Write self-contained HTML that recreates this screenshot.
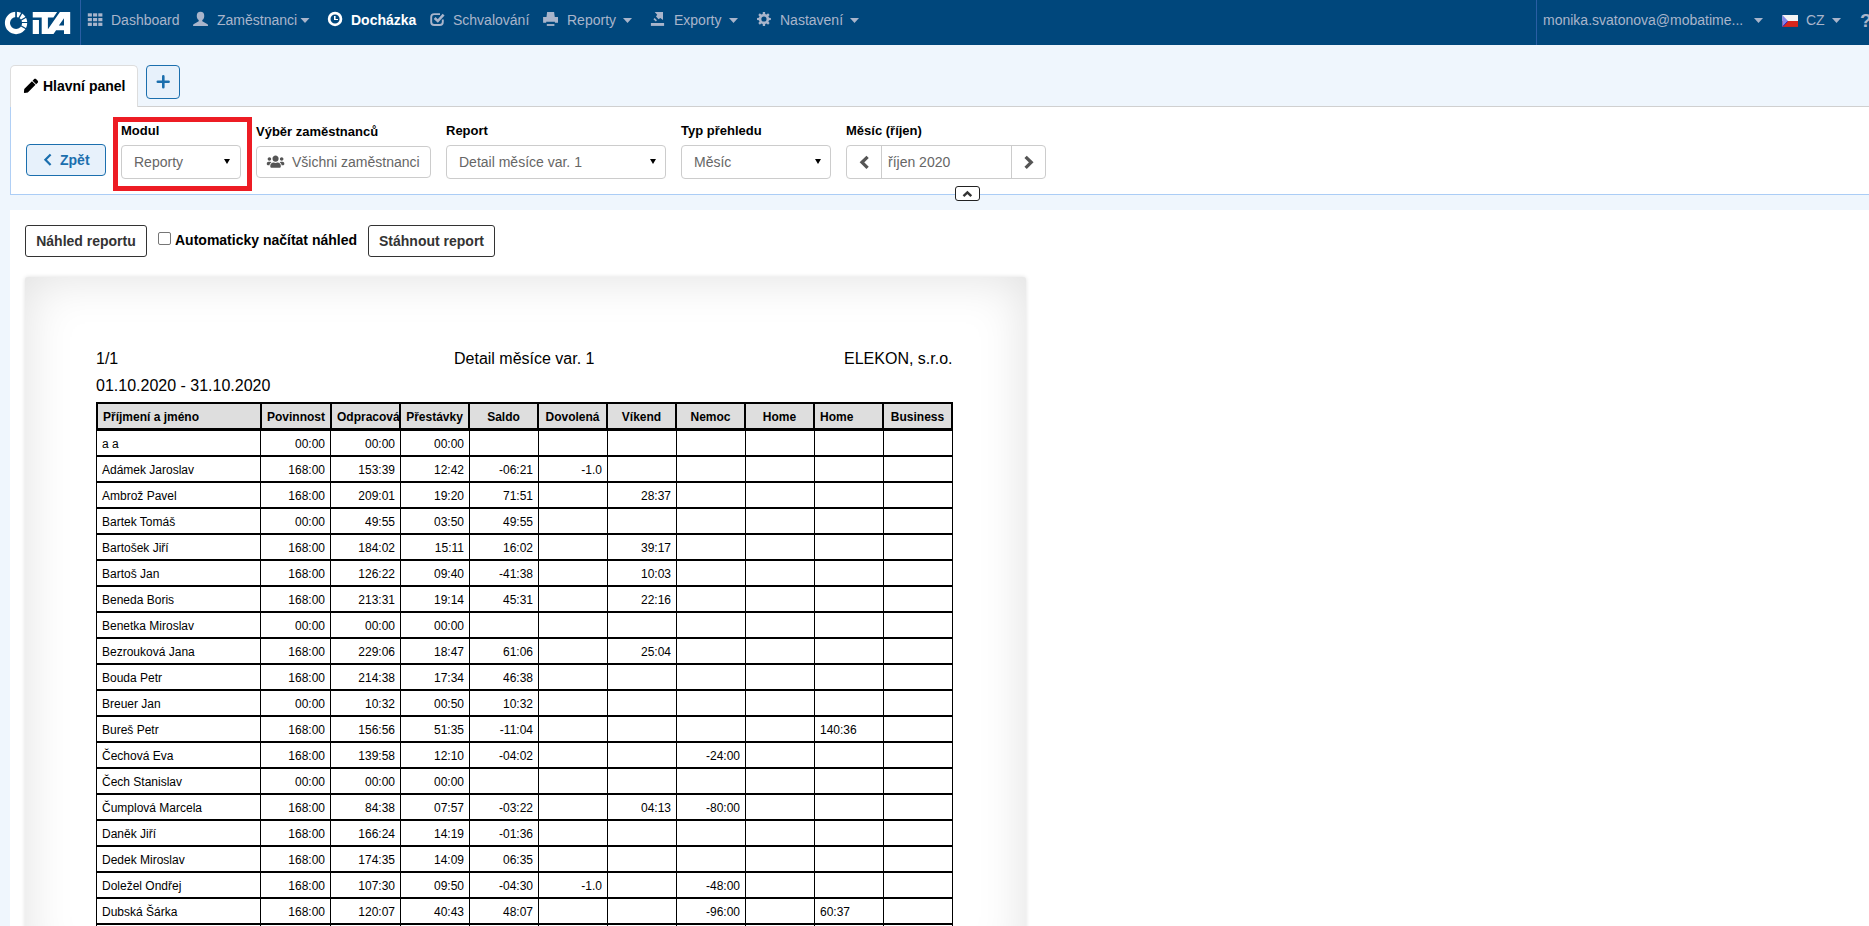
<!DOCTYPE html>
<html lang="cs">
<head>
<meta charset="utf-8">
<title>ITA - Docházka</title>
<style>
*{box-sizing:border-box}
html,body{margin:0;padding:0}
body{width:1869px;height:926px;overflow:hidden;background:#eff6fd;font-family:"Liberation Sans",Arial,sans-serif;font-size:14px;color:#000;position:relative}
.abs{position:absolute}
#nav{left:0;top:0;width:1869px;height:45px;background:#00477c}
#nav .it{position:absolute;top:0;height:40px;line-height:40px;font-size:14px;color:#a9b5cb;white-space:nowrap}
#nav .it.act{color:#fff;font-weight:bold}
#nav .sep{position:absolute;top:0;width:1px;height:45px;background:#2a5ea4}
.caret{position:absolute;width:0;height:0;border-left:4.5px solid transparent;border-right:4.5px solid transparent;border-top:5px solid #a9b5cb}
svg{position:absolute;overflow:visible}
#tab{left:10px;top:65px;width:128px;height:42px;background:#fff;border:1px solid #ddd;border-bottom:none;border-radius:5px 5px 0 0}
#tabline{left:138px;top:106px;width:1731px;height:1px;background:#d0d0d0}
#plus{left:146px;top:65px;width:34px;height:34px;border:1px solid #1b6fae;border-radius:4px;background:#e7f1fb}
#filter{left:10px;top:107px;width:1860px;height:88px;background:#fff;border-left:1px solid #b0cff5;border-bottom:1px solid #abcdf6}
.lbl{position:absolute;font-weight:bold;font-size:13px;line-height:16px;white-space:nowrap;color:#000}
.ctl{position:absolute;background:#fff;border:1px solid #ccc;border-radius:4px;color:#666;font-size:14px;white-space:nowrap}
.ctl span{position:absolute;top:0}
.arrow{position:absolute;width:0;height:0;border-left:3.3px solid transparent;border-right:3.3px solid transparent;border-top:5px solid #000}
#zpet{left:26px;top:144px;width:80px;height:32px;border:1px solid #1b6fae;border-radius:4px;background:#e7f1fb;color:#1b6fae;font-weight:bold;font-size:14px}
#red{left:113px;top:117px;width:139px;height:74px;border:5px solid #ed1c24}
#content{left:10px;top:210px;width:1859px;height:716px;background:#fff}
.btn2{position:absolute;height:32px;border:1px solid #333;border-radius:3px;background:#fff;font-weight:bold;font-size:14px;line-height:30px;text-align:center;color:#333;white-space:nowrap}
#page{left:24.5px;top:276.5px;width:1001px;height:700px;background:#fff;border-radius:3px;box-shadow:0 0 4px rgba(0,0,0,.13), inset 0 0 50px rgba(0,0,0,.125)}
.pt{position:absolute;font-size:16px;line-height:18px;white-space:nowrap;color:#000}
#thd{position:absolute;left:96px;top:402px;width:857px;height:29px;background:#dedede;border-top:2px solid #000;border-bottom:3px solid #000;font-size:12px}
#thd i{position:absolute;top:0;height:24px;background:#000}
#thd b{position:absolute;top:0;height:24px;line-height:26px;text-align:center;white-space:nowrap;overflow:hidden;font-weight:bold}
table{position:absolute;left:96px;top:431px;border-collapse:separate;border-spacing:0;table-layout:fixed;width:857px;font-size:12px}
td{height:26px;border-left:1px solid #000;border-bottom:2px solid #000;padding:0 5px 0 5px;white-space:nowrap;overflow:hidden;line-height:22px;padding-top:2px}
td:last-child{border-right:1px solid #000}
td.r{text-align:right}
td.l{text-align:left}
</style>
</head>
<body>
<div id="nav" class="abs">
  <div class="sep" style="left:80px"></div>
  <div class="sep" style="left:1536px"></div>
  <div class="it" style="left:111px">Dashboard</div>
  <div class="it" style="left:217px">Zaměstnanci</div>
  <div class="it act" style="left:351px">Docházka</div>
  <div class="it" style="left:453px">Schvalování</div>
  <div class="it" style="left:567px">Reporty</div>
  <div class="it" style="left:674px">Exporty</div>
  <div class="it" style="left:780px">Nastavení</div>
  <div class="it" style="left:1543px">monika.svatonova@mobatime...</div>
  <div class="it" style="left:1806px">CZ</div>
  <div class="it" style="left:1860px;top:1px;font-weight:bold;font-size:19px">?</div>
</div>

<div id="tabline" class="abs"></div>
<div id="filter" class="abs"></div>
<div id="tab" class="abs"><span class="abs" style="left:32px;top:11px;font-weight:bold;font-size:14px;line-height:18px;white-space:nowrap">Hlavní panel</span></div>
<div id="plus" class="abs"></div>

<div id="zpet" class="abs"><span class="abs" style="left:33px;top:7px;line-height:16px">Zpět</span></div>
<div id="red" class="abs"></div>
<div class="lbl" style="left:121px;top:123px">Modul</div>
<div class="ctl" style="left:121px;top:145px;width:120px;height:34px"><span style="left:12px;line-height:32px">Reporty</span><div class="arrow" style="left:102.3px;top:13px"></div></div>
<div class="lbl" style="left:256px;top:124px">Výběr zaměstnanců</div>
<div class="ctl" style="left:256px;top:146px;width:175px;height:32px"><span style="left:35px;line-height:31px">Všichni zaměstnanci</span></div>
<div class="lbl" style="left:446px;top:123px">Report</div>
<div class="ctl" style="left:446px;top:145px;width:220px;height:34px"><span style="left:12px;line-height:32px">Detail měsíce var. 1</span><div class="arrow" style="left:203px;top:13px"></div></div>
<div class="lbl" style="left:681px;top:123px">Typ přehledu</div>
<div class="ctl" style="left:681px;top:145px;width:150px;height:34px"><span style="left:12px;line-height:32px">Měsíc</span><div class="arrow" style="left:132.5px;top:13px"></div></div>
<div class="lbl" style="left:846px;top:123px">Měsíc (říjen)</div>
<div class="ctl" style="left:846px;top:145px;width:200px;height:34px"><span style="left:41px;line-height:32px">říjen 2020</span><div class="abs" style="left:34px;top:0;width:1px;height:32px;background:#ccc"></div><div class="abs" style="left:164px;top:0;width:1px;height:32px;background:#ccc"></div></div>
<div class="abs" style="left:955px;top:186px;width:25px;height:15px;border:1px solid #222;border-radius:3px;background:#fff"></div>

<div id="content" class="abs"></div>
<div class="btn2" style="left:25px;top:225px;width:122px">Náhled reportu</div>
<div class="abs" style="left:158px;top:232px;width:13px;height:13px;border:1px solid #767676;border-radius:2px;background:#fff"></div>
<div class="abs" style="left:175px;top:231px;font-weight:bold;font-size:14px;line-height:18px;white-space:nowrap">Automaticky načítat náhled</div>
<div class="btn2" style="left:368px;top:225px;width:127px">Stáhnout report</div>

<div id="page" class="abs"></div>
<div class="pt" style="left:96px;top:350px">1/1</div>
<div class="pt" style="left:454px;top:350px">Detail měsíce var. 1</div>
<div class="pt" style="left:752px;width:200.5px;text-align:right;top:350px">ELEKON, s.r.o.</div>
<div class="pt" style="left:96px;top:377px">01.10.2020 - 31.10.2020</div>
<div id="thd"><i style="left:0px;width:2px"></i><i style="left:164px;width:2px"></i><i style="left:234px;width:2px"></i><i style="left:303px;width:2px"></i><i style="left:372px;width:2px"></i><i style="left:441px;width:2px"></i><i style="left:510px;width:2px"></i><i style="left:579px;width:2px"></i><i style="left:648px;width:2px"></i><i style="left:717px;width:2px"></i><i style="left:786px;width:2px"></i><i style="left:855px;width:2px"></i><b style="left:7px;width:157px;text-align:left">Příjmení a jméno</b><b style="left:166px;width:68px">Povinnost</b><b style="left:241px;width:62px;text-align:left">Odpracová</b><b style="left:305px;width:67px">Přestávky</b><b style="left:374px;width:67px">Saldo</b><b style="left:443px;width:67px">Dovolená</b><b style="left:512px;width:67px">Víkend</b><b style="left:581px;width:67px">Nemoc</b><b style="left:650px;width:67px">Home</b><b style="left:724px;width:62px;text-align:left">Home</b><b style="left:788px;width:67px">Business</b></div>
<table>
<colgroup><col style="width:164px"><col style="width:70px"><col style="width:70px"><col style="width:69px"><col style="width:69px"><col style="width:69px"><col style="width:69px"><col style="width:69px"><col style="width:69px"><col style="width:69px"><col style="width:70px"></colgroup>

<tbody>
<tr><td class="l">a a</td><td class="r">00:00</td><td class="r">00:00</td><td class="r">00:00</td><td class="r"></td><td class="r"></td><td class="r"></td><td class="r"></td><td class="r"></td><td class="l"></td><td class="r"></td></tr>
<tr><td class="l">Adámek Jaroslav</td><td class="r">168:00</td><td class="r">153:39</td><td class="r">12:42</td><td class="r">-06:21</td><td class="r">-1.0</td><td class="r"></td><td class="r"></td><td class="r"></td><td class="l"></td><td class="r"></td></tr>
<tr><td class="l">Ambrož Pavel</td><td class="r">168:00</td><td class="r">209:01</td><td class="r">19:20</td><td class="r">71:51</td><td class="r"></td><td class="r">28:37</td><td class="r"></td><td class="r"></td><td class="l"></td><td class="r"></td></tr>
<tr><td class="l">Bartek Tomáš</td><td class="r">00:00</td><td class="r">49:55</td><td class="r">03:50</td><td class="r">49:55</td><td class="r"></td><td class="r"></td><td class="r"></td><td class="r"></td><td class="l"></td><td class="r"></td></tr>
<tr><td class="l">Bartošek Jiří</td><td class="r">168:00</td><td class="r">184:02</td><td class="r">15:11</td><td class="r">16:02</td><td class="r"></td><td class="r">39:17</td><td class="r"></td><td class="r"></td><td class="l"></td><td class="r"></td></tr>
<tr><td class="l">Bartoš Jan</td><td class="r">168:00</td><td class="r">126:22</td><td class="r">09:40</td><td class="r">-41:38</td><td class="r"></td><td class="r">10:03</td><td class="r"></td><td class="r"></td><td class="l"></td><td class="r"></td></tr>
<tr><td class="l">Beneda Boris</td><td class="r">168:00</td><td class="r">213:31</td><td class="r">19:14</td><td class="r">45:31</td><td class="r"></td><td class="r">22:16</td><td class="r"></td><td class="r"></td><td class="l"></td><td class="r"></td></tr>
<tr><td class="l">Benetka Miroslav</td><td class="r">00:00</td><td class="r">00:00</td><td class="r">00:00</td><td class="r"></td><td class="r"></td><td class="r"></td><td class="r"></td><td class="r"></td><td class="l"></td><td class="r"></td></tr>
<tr><td class="l">Bezrouková Jana</td><td class="r">168:00</td><td class="r">229:06</td><td class="r">18:47</td><td class="r">61:06</td><td class="r"></td><td class="r">25:04</td><td class="r"></td><td class="r"></td><td class="l"></td><td class="r"></td></tr>
<tr><td class="l">Bouda Petr</td><td class="r">168:00</td><td class="r">214:38</td><td class="r">17:34</td><td class="r">46:38</td><td class="r"></td><td class="r"></td><td class="r"></td><td class="r"></td><td class="l"></td><td class="r"></td></tr>
<tr><td class="l">Breuer Jan</td><td class="r">00:00</td><td class="r">10:32</td><td class="r">00:50</td><td class="r">10:32</td><td class="r"></td><td class="r"></td><td class="r"></td><td class="r"></td><td class="l"></td><td class="r"></td></tr>
<tr><td class="l">Bureš Petr</td><td class="r">168:00</td><td class="r">156:56</td><td class="r">51:35</td><td class="r">-11:04</td><td class="r"></td><td class="r"></td><td class="r"></td><td class="r"></td><td class="l">140:36</td><td class="r"></td></tr>
<tr><td class="l">Čechová Eva</td><td class="r">168:00</td><td class="r">139:58</td><td class="r">12:10</td><td class="r">-04:02</td><td class="r"></td><td class="r"></td><td class="r">-24:00</td><td class="r"></td><td class="l"></td><td class="r"></td></tr>
<tr><td class="l">Čech Stanislav</td><td class="r">00:00</td><td class="r">00:00</td><td class="r">00:00</td><td class="r"></td><td class="r"></td><td class="r"></td><td class="r"></td><td class="r"></td><td class="l"></td><td class="r"></td></tr>
<tr><td class="l">Čumplová Marcela</td><td class="r">168:00</td><td class="r">84:38</td><td class="r">07:57</td><td class="r">-03:22</td><td class="r"></td><td class="r">04:13</td><td class="r">-80:00</td><td class="r"></td><td class="l"></td><td class="r"></td></tr>
<tr><td class="l">Daněk Jiří</td><td class="r">168:00</td><td class="r">166:24</td><td class="r">14:19</td><td class="r">-01:36</td><td class="r"></td><td class="r"></td><td class="r"></td><td class="r"></td><td class="l"></td><td class="r"></td></tr>
<tr><td class="l">Dedek Miroslav</td><td class="r">168:00</td><td class="r">174:35</td><td class="r">14:09</td><td class="r">06:35</td><td class="r"></td><td class="r"></td><td class="r"></td><td class="r"></td><td class="l"></td><td class="r"></td></tr>
<tr><td class="l">Doležel Ondřej</td><td class="r">168:00</td><td class="r">107:30</td><td class="r">09:50</td><td class="r">-04:30</td><td class="r">-1.0</td><td class="r"></td><td class="r">-48:00</td><td class="r"></td><td class="l"></td><td class="r"></td></tr>
<tr><td class="l">Dubská Šárka</td><td class="r">168:00</td><td class="r">120:07</td><td class="r">40:43</td><td class="r">48:07</td><td class="r"></td><td class="r"></td><td class="r">-96:00</td><td class="r"></td><td class="l">60:37</td><td class="r"></td></tr>
<tr><td class="l">Dvořák Jan</td><td class="r">168:00</td><td class="r">150:00</td><td class="r">10:00</td><td class="r">02:00</td><td class="r"></td><td class="r"></td><td class="r"></td><td class="r"></td><td class="l"></td><td class="r"></td></tr>
</tbody>
</table>
<svg id="ov" class="abs" style="left:0;top:0;pointer-events:none" width="1869" height="926" viewBox="0 0 1869 926">
<circle cx="16.05" cy="22.98" r="8.6" fill="none" stroke="#fff" stroke-width="5.1"/>
<line x1="16.05" y1="18.48" x2="16.05" y2="10.48" stroke="#00477c" stroke-width="1.7"/>
<line x1="18.30" y1="19.08" x2="22.30" y2="12.15" stroke="#00477c" stroke-width="1.3"/>
<line x1="19.95" y1="20.73" x2="26.88" y2="16.73" stroke="#00477c" stroke-width="1.3"/>
<line x1="20.55" y1="22.5" x2="28.55" y2="22.5" stroke="#00477c" stroke-width="1"/>
<line x1="19.95" y1="25.23" x2="26.88" y2="29.23" stroke="#00477c" stroke-width="1.3"/>
<path fill="#fff" d="M32.75,12.06H57.1L53.4,17.4H47.9V33.9H41.7V17.4H32.75Z M32.75,20H38.95V33.9H32.75Z"/>
<path fill="#fff" fill-rule="evenodd" d="M59.9,12.06H70.2V33.9H64V30.3H56.1L53.5,33.9H46V29.2H47.9Z M64,18.3V25.55H58.86Z"/>
<rect x="87.80" y="13.30" width="4.1" height="3.25" fill="#a9b5cb"/>
<rect x="93.05" y="13.30" width="4.1" height="3.25" fill="#a9b5cb"/>
<rect x="98.30" y="13.30" width="4.1" height="3.25" fill="#a9b5cb"/>
<rect x="87.80" y="18.00" width="4.1" height="3.25" fill="#a9b5cb"/>
<rect x="93.05" y="18.00" width="4.1" height="3.25" fill="#a9b5cb"/>
<rect x="98.30" y="18.00" width="4.1" height="3.25" fill="#a9b5cb"/>
<rect x="87.80" y="22.70" width="4.1" height="3.25" fill="#a9b5cb"/>
<rect x="93.05" y="22.70" width="4.1" height="3.25" fill="#a9b5cb"/>
<rect x="98.30" y="22.70" width="4.1" height="3.25" fill="#a9b5cb"/>
<ellipse cx="200.5" cy="16" rx="3.75" ry="4.2" fill="#a9b5cb"/>
<path fill="#a9b5cb" d="M198.7,19H202.3V21.2L207.6,24.2Q208,24.6 208,25.2V26H193.1V25.2Q193.1,24.6 193.5,24.2L198.7,21.2Z"/>
<circle cx="335.05" cy="18.95" r="5.9" fill="none" stroke="#fff" stroke-width="2.7"/>
<path fill="#fff" d="M334,16H335.6V18.9H338V20.1H334Z"/>
<path fill="none" stroke="#a9b5cb" stroke-width="1.9" d="M440,14.1H434.2Q431.2,14.1 431.2,17.1V22Q431.2,25 434.2,25H439.8Q442.8,25 442.8,22V19.5"/>
<path fill="none" stroke="#a9b5cb" stroke-width="2.6" d="M434.6,18 L437.8,21 L443.6,14.6"/>
<path fill="#a9b5cb" d="M547.1,12H554.1L554.8,17.1H558V22.8H554.9V21.8H546.2V22.8H543.1V17.1H546.5Z"/>
<rect x="546.8" y="24.1" width="7.6" height="1.8" fill="#a9b5cb"/>
<path fill="#a9b5cb" d="M654.7,12H663V20.1L660.3,17.9L658.6,19.3L656,16.6L657.2,14.8Z"/>
<path fill="none" stroke="#a9b5cb" stroke-width="1.6" d="M654,18.6L656.4,20.8"/>
<rect x="650.9" y="23" width="13.2" height="2.9" fill="#a9b5cb"/>
<path transform="translate(763.95,19)" fill="#a9b5cb" fill-rule="evenodd" d="M-1.24,-5.05 L-1.12,-6.91 L1.12,-6.91 L1.24,-5.05 L2.70,-4.45 L4.10,-5.68 L5.68,-4.10 L4.45,-2.70 L5.05,-1.24 L6.91,-1.12 L6.91,1.12 L5.05,1.24 L4.45,2.70 L5.68,4.10 L4.10,5.68 L2.70,4.45 L1.24,5.05 L1.12,6.91 L-1.12,6.91 L-1.24,5.05 L-2.70,4.45 L-4.10,5.68 L-5.68,4.10 L-4.45,2.70 L-5.05,1.24 L-6.91,1.12 L-6.91,-1.12 L-5.05,-1.24 L-4.45,-2.70 L-5.68,-4.10 L-4.10,-5.68 L-2.70,-4.45Z M2.6,0 A2.6,2.6 0 1,0 -2.6,0 A2.6,2.6 0 1,0 2.6,0Z"/>
<rect x="1782.4" y="15" width="15.6" height="6" fill="#f4f4f4"/>
<rect x="1782.4" y="21" width="15.6" height="5.9" fill="#d9261c"/>
<path fill="#8585e8" d="M1782.4,15L1788,21L1782.4,26.9Z"/><path stroke="#1c1cc8" stroke-width="0.9" fill="none" d="M1787.6,21.4L1782.8,26.5"/>
<path fill="#a9b5cb" d="M300.5,18h9l-4.5,5z"/>
<path fill="#a9b5cb" d="M623,18h9l-4.5,5z"/>
<path fill="#a9b5cb" d="M729,18h9l-4.5,5z"/>
<path fill="#a9b5cb" d="M850,18h9l-4.5,5z"/>
<path fill="#a9b5cb" d="M1754,18h9l-4.5,5z"/>
<path fill="#a9b5cb" d="M1832,18h9l-4.5,5z"/>
<path transform="translate(23.9,78.7) scale(0.027734375)" fill="#000" d="M290.74 93.24l128.02 128.02-277.99 277.99-114.14 12.6C11.35 513.54-1.56 500.62.14 485.34l12.7-114.22 277.9-277.88zm207.2-19.06l-60.11-60.11c-18.75-18.75-49.16-18.75-67.91 0l-56.55 56.55 128.02 128.02 56.55-56.55c18.75-18.76 18.75-49.16 0-67.91z"/>
<path d="M157.8,81.75H168.6 M163.3,76.4V87.2" stroke="#1b6fae" stroke-width="2.6" stroke-linecap="round" fill="none"/>
<path d="M50.6,154.5L45.4,159.8L50.6,165.1" stroke="#1b6fae" stroke-width="2.2" fill="none"/>
<path transform="translate(266.8,154.7) scale(0.02734375)" fill="#555" d="M96 224c35.3 0 64-28.7 64-64s-28.7-64-64-64-64 28.7-64 64 28.7 64 64 64zm448 0c35.3 0 64-28.7 64-64s-28.7-64-64-64-64 28.7-64 64 28.7 64 64 64zm32 32h-64c-17.6 0-33.5 7.1-45.1 18.6 40.3 22.1 68.9 62 75.1 109.4h66c17.7 0 32-14.3 32-32v-32c0-35.3-28.7-64-64-64zm-256 0c61.9 0 112-50.1 112-112S381.900 32 320 32 208 82.1 208 144s50.1 112 112 112zm76.8 32h-8.3c-20.8 10-43.9 16-68.500 16s-47.600-6-68.500-16h-8.300C179.6 288 128 339.6 128 403.2V432c0 26.5 21.5 48 48 48h288c26.5 0 48-21.5 48-48v-28.800c0-63.600-51.600-115.200-115.200-115.200zm-223.700-13.400C161.5 263.1 145.6 256 128 256H64c-35.3 0-64 28.7-64 64v32c0 17.7 14.3 32 32 32h65.9c6.3-47.400 34.900-87.300 75.200-109.400z"/>
<path d="M867.6,156.8L862,162.35L867.6,167.9" stroke="#555" stroke-width="3.3" fill="none"/>
<path d="M1025.6,156.8L1031.2,162.35L1025.6,167.9" stroke="#555" stroke-width="3.3" fill="none"/>
<path d="M963.5,196.2L967.4,192.4L971.3,196.2" stroke="#333" stroke-width="2.4" fill="none"/>
</svg>
</body>
</html>
